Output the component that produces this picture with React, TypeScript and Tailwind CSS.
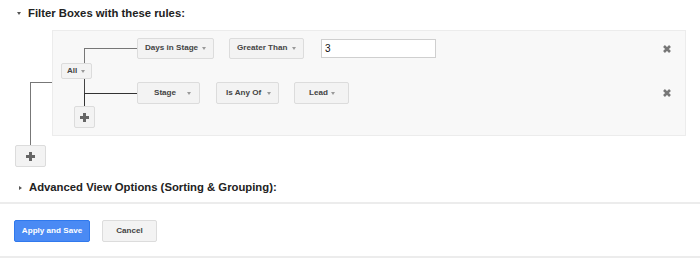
import type { ReactNode } from "react"

const font = { fontFamily: '"Liberation Sans", Arial, sans-serif' }

const Caret = () => (
  <span className="inline-block h-0 w-0 shrink-0 border-x-[2.5px] border-t-[3px] border-x-transparent border-t-[#999]" />
)

const Btn = ({ children, className = "" }: { children: ReactNode; className?: string }) => (
  <div
    className={`flex items-center rounded-[2px] border border-[#dcdcdc] bg-[#f3f3f3] text-[8.1px] font-bold text-[#444] ${className}`}
  >
    {children}
  </div>
)

const Drop = ({ label, className = "" }: { label: string; className?: string }) => (
  <Btn className={`h-[21px] justify-between pr-[7px] ${className}`}>
    <span>{label}</span>
    <Caret />
  </Btn>
)

const PlusIcon = () => (
  <svg width="9" height="9" viewBox="0 0 9 9">
    <path d="M4.5 0v9M0 4.5h9" stroke="#666" strokeWidth="3" />
  </svg>
)

const PlusBtn = ({ className = "" }: { className?: string }) => (
  <Btn className={`h-[22px] justify-center ${className}`}>
    <PlusIcon />
  </Btn>
)

const XIcon = () => (
  <svg width="8" height="8" viewBox="0 0 8 8" className="mr-[14px]">
    <path d="M1 1l6 6M7 1l-6 6" stroke="#777" strokeWidth="2.6" />
  </svg>
)

export default function App() {
  return (
    <div className="h-[258px] w-[700px] overflow-hidden bg-white" style={font}>
      <div className="flex items-center pl-[17px] pt-[7px] text-[11.3px] font-bold leading-[13px] text-[#222]">
        <span className="mr-[7px] inline-block h-0 w-0 border-x-[2.5px] border-t-[3px] border-x-transparent border-t-[#555]" />
        Filter Boxes with these rules:
      </div>

      <div className="mt-[10px] flex pl-[14px]">
        <div className="flex w-[38px] flex-col">
          <div className="ml-[16px] mt-[52px] flex-1 border-l border-t border-[#777]" />
        </div>
        <div className="flex w-[634px] border border-[#ececec] bg-[#f8f8f8] pb-[7px] pl-[8px] pr-0">
          <div className="flex w-[76px] flex-col">
            <div className="ml-[23px] mt-[17px] h-[15px] w-[53px] border-l border-t border-[#777]" />
            <Btn className="h-[16px] w-[31px] gap-[4px] pl-[5px]">
              <span>All</span>
              <Caret />
            </Btn>
            <div className="ml-[23px] h-[14px] border-l border-[#444]" />
            <div className="ml-[23px] h-[13px] w-[53px] border-l border-t border-[#333]" />
            <PlusBtn className="ml-[13px] h-[21px] w-[21px]" />
          </div>
          <div className="flex flex-1 flex-col pt-[7px]">
            <div className="flex h-[21px] items-center">
              <Drop label="Days in Stage" className="w-[77px] pl-[7px]" />
              <Drop label="Greater Than" className="ml-[15px] w-[75px] pl-[7px]" />
              <div className="ml-[17px] flex h-[19px] w-[115px] items-center border border-[#cfcfcf] bg-white pl-[3px] text-[10px] text-[#111]">
                3
              </div>
              <div className="flex-1" />
              <XIcon />
            </div>
            <div className="mt-[23px] flex h-[22px] items-center">
              <Drop label="Stage" className="h-[22px] w-[63px] pl-[16px] pr-[8px]" />
              <Drop label="Is Any Of" className="ml-[16px] h-[22px] w-[63px] pl-[9px]" />
              <Drop label="Lead" className="ml-[15px] h-[22px] w-[55px] pl-[14px] pr-[13px]" />
              <div className="flex-1" />
              <XIcon />
            </div>
          </div>
        </div>
      </div>

      <div className="flex flex-col pl-[15px]">
        <div className="ml-[15px] h-[9px] w-0 border-l border-[#777]" />
        <PlusBtn className="w-[31px]" />
      </div>

      <div className="mt-[14px] flex items-center pl-[19px] text-[11.3px] font-bold leading-[13px] text-[#222]">
        <span className="mr-[7px] inline-block h-0 w-0 border-y-[2.5px] border-l-[3px] border-y-transparent border-l-[#555]" />
        Advanced View Options (Sorting &amp; Grouping):
      </div>

      <div className="mt-[8px] h-[2px] bg-[#ececec]" />

      <div className="flex gap-[12px] pl-[14px] pt-[16px]">
        <div className="flex h-[22px] w-[76px] items-center justify-center rounded-[2px] border border-[#3079ed] bg-[#4a8af4] text-[8.1px] font-bold text-white">
          Apply and Save
        </div>
        <Btn className="h-[22px] w-[55px] justify-center">Cancel</Btn>
      </div>

      <div className="mt-[14px] h-[2px] bg-[#ececec]" />
    </div>
  )
}
